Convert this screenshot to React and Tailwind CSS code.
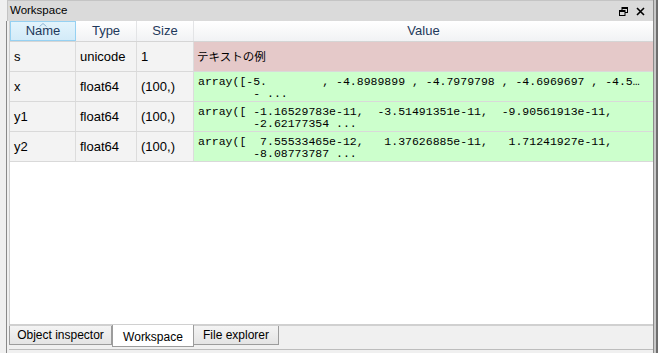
import React from "react";

const rows = [
  { name: "s", type: "unicode", size: "1", value: "テキストの例", kind: "text" },
  {
    name: "x",
    type: "float64",
    size: "(100,)",
    value:
      "array([-5.        , -4.8989899 , -4.7979798 , -4.6969697 , -4.5…\n        - ...",
    kind: "array",
  },
  {
    name: "y1",
    type: "float64",
    size: "(100,)",
    value:
      "array([ -1.16529783e-11,  -3.51491351e-11,  -9.90561913e-11,\n        -2.62177354 ...",
    kind: "array",
  },
  {
    name: "y2",
    type: "float64",
    size: "(100,)",
    value:
      "array([  7.55533465e-12,   1.37626885e-11,   1.71241927e-11,\n        -8.08773787 ...",
    kind: "array",
  },
];

const ui = { fontFamily: '"Liberation Sans", Arial, sans-serif' };

const App = () => {
  return (
    <div
      className="w-[658px] h-[353px] bg-[#f0f0f0] flex flex-col overflow-hidden text-black"
      style={ui}
    >
      {/* dock title bar */}
      <div className="flex h-[21px]">
        <div className="w-[7px]" />
        <div className="flex-1 flex items-center justify-between bg-[#dadada] border-t border-[#c4c4c4] border-l border-[#b0b0b0] pl-[2px] pr-[8px]">
          <span className="text-[11.5px] leading-none">Workspace</span>
          <div className="flex items-center gap-[8px]">
            <svg width="9" height="9" viewBox="0 0 9 9">
              <rect x="3" y="0.5" width="5.5" height="5" fill="none" stroke="#000" strokeWidth="1" />
              <rect x="3" y="0.5" width="5.5" height="1.5" fill="#000" />
              <rect x="0.5" y="3.5" width="5.5" height="5" fill="#dadada" stroke="#000" strokeWidth="1" />
              <rect x="0.5" y="3.5" width="5.5" height="1.5" fill="#000" />
            </svg>
            <svg width="9" height="9" viewBox="0 0 9 9">
              <path d="M1 1 L8 8 M8 1 L1 8" stroke="#000" strokeWidth="1.6" />
            </svg>
          </div>
        </div>
        <div className="w-[5px] bg-[#c8c8c8] border-l border-[#8c8c8c] border-r-2 border-r-[#6e6e6e]" />
      </div>

      {/* dock body */}
      <div className="flex flex-1 min-h-0">
        <div className="w-[7px] border-r border-[#8a8a8a]" />
        <div className="flex-1 flex flex-col pl-[2px]">
          <div className="flex-1 bg-white border-b-2 border-[#8f8f8f] border-l border-[#d0d0d0]">
            {/* header */}
            <div className="flex h-[21px] bg-gradient-to-b from-white to-[#f1f2f4] border-b border-[#d5d5d5] text-[13px] text-[#1e395b]">
              <div className="relative w-[66px] flex items-center justify-center bg-gradient-to-b from-[#e3f4fc] to-[#d3ebf8] border border-[#96d1f2]">
                <svg className="absolute top-[1px] left-[28px]" width="8" height="4" viewBox="0 0 8 4">
                  <path d="M0.5 3.5 L4 0.5 L7.5 3.5" fill="none" stroke="#8fb5d6" strokeWidth="1" />
                </svg>
                Name
              </div>
              <div className="w-[61px] flex items-center justify-center border-r border-[#e3e4e6]">Type</div>
              <div className="w-[57px] flex items-center justify-center border-r border-[#e3e4e6]">Size</div>
              <div className="flex-1 flex items-center justify-center">Value</div>
            </div>
            {/* rows */}
            {rows.map((r) => (
              <div key={r.name} className="flex h-[30px] border-b border-[#d9d9d9] text-[13px]">
                <div className="w-[66px] bg-[#f3f3f3] border-r border-[#dcdcdc] pl-[4px] flex items-center">
                  {r.name}
                </div>
                <div className="w-[61px] bg-[#f3f3f3] border-r border-[#dcdcdc] pl-[4px] flex items-center">
                  {r.type}
                </div>
                <div className="w-[57px] bg-[#f3f3f3] border-r border-[#dcdcdc] pl-[4px] flex items-center">
                  {r.size}
                </div>
                {r.kind === "text" ? (
                  <div
                    className="flex-1 bg-[#e5c9c9] pl-[3px] flex items-center text-[11.5px]"
                    style={{ fontFamily: '"Noto Sans CJK JP", sans-serif' }}
                  >
                    {r.value}
                  </div>
                ) : (
                  <div
                    className="flex-1 bg-[#ccffcc] pl-[4px] pt-[4px] whitespace-pre text-[11.5px] leading-[12px] overflow-hidden text-black"
                    style={{ fontFamily: '"Liberation Mono", "Courier New", monospace' }}
                  >
                    {r.value}
                  </div>
                )}
              </div>
            ))}
          </div>

          {/* tabs */}
          <div className="flex h-[21px] items-start text-[12px]">
            <div className="w-[103px] h-[19px] flex items-center justify-center bg-gradient-to-b from-[#f4f4f4] to-[#e4e4e4] border border-t-0 border-[#9c9c9c]">
              Object inspector
            </div>
            <div className="w-[82px] h-[22px] -mt-[1px] flex items-center justify-center bg-white border border-t-0 border-[#9c9c9c] pt-[3px]">
              Workspace
            </div>
            <div className="w-[85px] h-[19px] flex items-center justify-center bg-gradient-to-b from-[#f4f4f4] to-[#e4e4e4] border border-t-0 border-l-0 border-[#9c9c9c]">
              File explorer
            </div>
          </div>
          <div className="h-[4px] mt-[2px] border-t border-[#bdbdbd]" />
        </div>
        <div className="w-[5px] bg-[#c8c8c8] border-l border-[#8c8c8c] border-r-2 border-r-[#6e6e6e]" />
      </div>
    </div>
  );
};

export default App;
